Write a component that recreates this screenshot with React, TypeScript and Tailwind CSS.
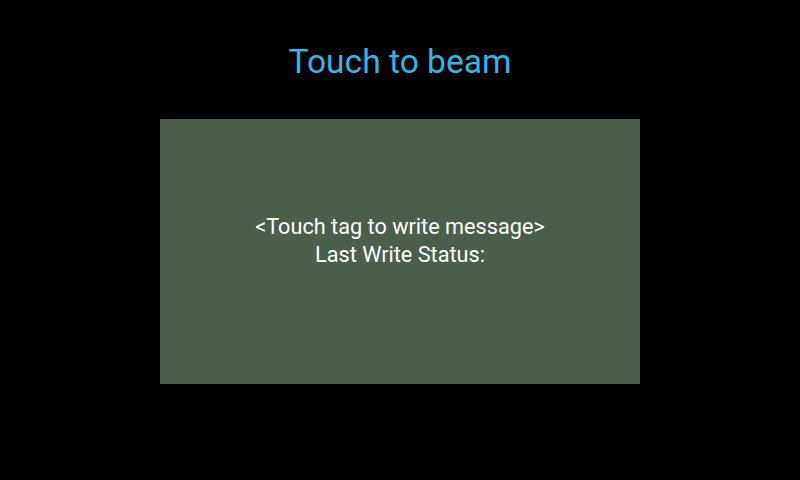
export default function App() {
  return (
    <div className="w-[800px] h-[480px] bg-black flex flex-col items-center" style={{ fontFamily: "Roboto, sans-serif" }}>
      <div className="mt-[42px] h-[40px] text-[33.6px] leading-[40px] text-[#33b5e5]">Touch to beam</div>
      <div className="mt-[37px] w-[480px] h-[265px] bg-[#4b5e4b] flex flex-col items-center pt-[94px] text-white text-[21.7px] leading-[28px]">
        <div>&lt;Touch tag to write message&gt;</div>
        <div>Last Write Status:</div>
      </div>
    </div>
  );
}
